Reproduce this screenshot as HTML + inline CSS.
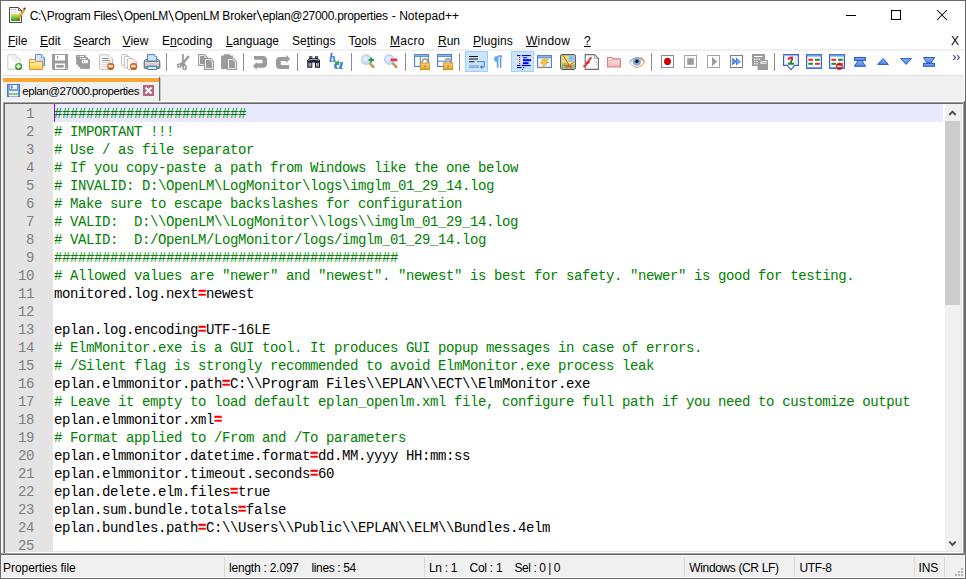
<!DOCTYPE html>
<html>
<head>
<meta charset="utf-8">
<title>Notepad++</title>
<style>
*{box-sizing:border-box;margin:0;padding:0}
html,body{width:966px;height:579px;overflow:hidden;background:#fff;font-family:"Liberation Sans",sans-serif}
#win{position:absolute;left:0;top:0;width:966px;height:579px;background:#f0f0f0;overflow:hidden}
.abs{position:absolute}
/* window frame */
#bl{left:0;top:0;width:1px;height:579px;background:#6a6a6a}
#wl{left:1px;top:1px;width:1px;height:552px;background:#fff}
#wr{left:964px;top:1px;width:1px;height:100px;background:#fff}
#bt{left:0;top:0;width:966px;height:1px;background:#6a6a6a}
#br{left:965px;top:0;width:1px;height:579px;background:#6a6a6a}
#bb{left:0;top:578px;width:966px;height:1px;background:#6a6a6a}
/* title */
#title{left:1px;top:1px;width:964px;height:30px;background:#fff}
.tt{position:absolute;top:8px;font-size:12px;line-height:16px;color:#000;white-space:pre}
/* menu */
#menu{left:1px;top:31px;width:964px;height:18px;background:#fff}
.mi{position:absolute;top:33px;font-size:12px;line-height:16px;color:#000;white-space:nowrap}
.mi u{text-decoration:underline;text-underline-offset:1px}
/* toolbar */
#tbar{left:1px;top:51px;width:964px;height:24px;background:#fff}
#tline{left:1px;top:75px;width:964px;height:1px;background:#dfdfdf}
.ic{position:absolute;top:54px;width:16px;height:16px}
.sep{position:absolute;top:53px;width:1px;height:18px;background:#8d8d8d}
.act{position:absolute;top:51px;width:23px;height:21px;background:#cce4f7;border:1px solid #99d1ff}
/* tabs */
#tabbar{left:1px;top:76px;width:963px;height:25px;background:#f0f0f0}
#tabw{left:1px;top:101px;width:964px;height:1px;background:#fff}
#tabh{left:2px;top:76px;width:157px;height:2px;background:#fbfbfb}
#tabl{left:2px;top:78px;width:1px;height:23px;background:#fbfbfb}
#tabr{left:159px;top:77px;width:1px;height:24px;background:#6b6b6b}
#tabr2{left:160px;top:78px;width:1px;height:23px;background:#c4c4c4}
#tabo{left:3px;top:78px;width:156px;height:4px;background:#faa634}
#tabt{left:22.3px;top:84px;font-size:11.5px;line-height:14px;color:#000;white-space:nowrap;letter-spacing:-0.43px}
/* editor */
#edo{left:3px;top:102px;width:960px;height:451px;background:#a0a0a0}
#edi{left:4px;top:103px;width:959px;height:450px;background:#696969}
#edw{left:5px;top:104px;width:958px;height:449px;background:#fff}
#ede{left:5px;top:104px;width:957px;height:448px;background:#e3e3e3}
#edr1{left:963px;top:102px;width:1px;height:453px;background:#a0a0a0}
#edr2{left:964px;top:101px;width:1px;height:454px;background:#696969}
#ed{left:5px;top:104px;width:956px;height:447px;background:#fff;overflow:hidden}
#gut{left:0;top:0;width:48px;height:447px;background:#e4e4e4}
#hl{left:48px;top:0;width:890px;height:18px;background:#e8e8ff}
#caret{left:49px;top:0;width:1px;height:18px;background:#8000ff}
.ln{position:absolute;left:0;width:29px;text-align:right;height:18px;line-height:18px;font-family:"Liberation Mono",monospace;font-size:14px;letter-spacing:-0.4px;color:#808080;white-space:pre;padding-top:1px}
.l{position:absolute;left:49px;height:18px;line-height:18px;font-family:"Liberation Mono",monospace;font-size:14px;letter-spacing:-0.4px;color:#000;white-space:pre;padding-top:1px}
.c{color:#008000}
.e{color:#ff0000;font-weight:bold;-webkit-text-stroke:0.35px #ff0000}
/* scrollbar */
#sb{left:940px;top:0;width:16px;height:447px;background:#f0f0f0}
#sbt{left:0px;top:17px;width:15px;height:184px;background:#cdcdcd}
/* status */
#stl1{left:1px;top:553px;width:964px;height:1px;background:#a0a0a0}
#stl2{left:1px;top:554px;width:964px;height:1px;background:#696969}
#status{left:1px;top:555px;width:964px;height:23px;background:#f0f0f0}
.st{position:absolute;top:561px;font-size:12px;line-height:14px;color:#000;white-space:nowrap}
.ss{position:absolute;top:557px;width:1px;height:20px;background:#d7d7d7}
</style>
</head>
<body>
<div id="win">
  <div id="title" class="abs"></div>
  <div class="tt" style="left:29.8px;letter-spacing:-0.45px">C:</div>
  <div class="tt" style="left:46.8px;letter-spacing:-0.345px">Program Files</div>
  <div class="tt" style="left:123.7px;letter-spacing:-0.289px">OpenLM</div>
  <div class="tt" style="left:174.4px;letter-spacing:-0.2px">OpenLM Broker</div>
  <div class="tt" style="left:262.4px;letter-spacing:-0.291px">eplan@27000.properties</div>
  <div class="tt" style="left:391.7px;letter-spacing:0.06px">- Notepad++</div>
  <svg class="abs" style="left:0;top:0" width="300" height="30"><path d="M41.3 10.4 L46 21.2" stroke="#000" stroke-width="1.05" fill="none"/></svg>
  <svg class="abs" style="left:0;top:0" width="300" height="30"><path d="M117.6 10.4 L122.5 21.2" stroke="#000" stroke-width="1.05" fill="none"/></svg>
  <svg class="abs" style="left:0;top:0" width="300" height="30"><path d="M168.8 10.4 L173.4 21.2" stroke="#000" stroke-width="1.05" fill="none"/></svg>
  <svg class="abs" style="left:0;top:0" width="300" height="30"><path d="M257.2 10.4 L261.8 21.2" stroke="#000" stroke-width="1.05" fill="none"/></svg>
  <div id="menu" class="abs"></div>
  <div id="tbar" class="abs"></div><div id="tline" class="abs"></div>
  <div id="tabbar" class="abs"></div>
  <div id="tabw" class="abs"></div><div id="tabh" class="abs"></div><div id="tabl" class="abs"></div><div id="tabr" class="abs"></div><div id="tabr2" class="abs"></div>
  <div id="tabo" class="abs"></div>
  <div id="tabt" class="abs">eplan@27000.properties</div>
  <div id="edo" class="abs"></div>
  <div id="edi" class="abs"></div><div id="edw" class="abs"></div><div id="ede" class="abs"></div><div id="edr1" class="abs"></div><div id="edr2" class="abs"></div>
  <div id="ed" class="abs">
    <div id="gut" class="abs"></div>
    <div id="hl" class="abs"></div>
    <div id="caret" class="abs"></div>
    <div class="ln" style="top:0px">1</div>
    <div class="l c" style="top:0px">########################</div>
    <div class="ln" style="top:18px">2</div>
    <div class="l c" style="top:18px"># IMPORTANT !!!</div>
    <div class="ln" style="top:36px">3</div>
    <div class="l c" style="top:36px"># Use / as file separator</div>
    <div class="ln" style="top:54px">4</div>
    <div class="l c" style="top:54px"># If you copy-paste a path from Windows like the one below</div>
    <div class="ln" style="top:72px">5</div>
    <div class="l c" style="top:72px"># INVALID: D:\OpenLM\LogMonitor\logs\imglm_01_29_14.log</div>
    <div class="ln" style="top:90px">6</div>
    <div class="l c" style="top:90px"># Make sure to escape backslashes for configuration</div>
    <div class="ln" style="top:108px">7</div>
    <div class="l c" style="top:108px"># VALID:  D:\\OpenLM\\LogMonitor\\logs\\imglm_01_29_14.log</div>
    <div class="ln" style="top:126px">8</div>
    <div class="l c" style="top:126px"># VALID:  D:/OpenLM/LogMonitor/logs/imglm_01_29_14.log</div>
    <div class="ln" style="top:144px">9</div>
    <div class="l c" style="top:144px">###########################################</div>
    <div class="ln" style="top:162px">10</div>
    <div class="l c" style="top:162px"># Allowed values are "newer" and "newest". "newest" is best for safety. "newer" is good for testing.</div>
    <div class="ln" style="top:180px">11</div>
    <div class="l" style="top:180px">monitored.log.next<span class="e">=</span>newest</div>
    <div class="ln" style="top:198px">12</div>
    <div class="ln" style="top:216px">13</div>
    <div class="l" style="top:216px">eplan.log.encoding<span class="e">=</span>UTF-16LE</div>
    <div class="ln" style="top:234px">14</div>
    <div class="l c" style="top:234px"># ElmMonitor.exe is a GUI tool. It produces GUI popup messages in case of errors.</div>
    <div class="ln" style="top:252px">15</div>
    <div class="l c" style="top:252px"># /Silent flag is strongly recommended to avoid ElmMonitor.exe process leak</div>
    <div class="ln" style="top:270px">16</div>
    <div class="l" style="top:270px">eplan.elmmonitor.path<span class="e">=</span>C:\\Program Files\\EPLAN\\ECT\\ElmMonitor.exe</div>
    <div class="ln" style="top:288px">17</div>
    <div class="l c" style="top:288px"># Leave it empty to load default eplan_openlm.xml file, configure full path if you need to customize output</div>
    <div class="ln" style="top:306px">18</div>
    <div class="l" style="top:306px">eplan.elmmonitor.xml<span class="e">=</span></div>
    <div class="ln" style="top:324px">19</div>
    <div class="l c" style="top:324px"># Format applied to /From and /To parameters</div>
    <div class="ln" style="top:342px">20</div>
    <div class="l" style="top:342px">eplan.elmmonitor.datetime.format<span class="e">=</span>dd.MM.yyyy HH:mm:ss</div>
    <div class="ln" style="top:360px">21</div>
    <div class="l" style="top:360px">eplan.elmmonitor.timeout.seconds<span class="e">=</span>60</div>
    <div class="ln" style="top:378px">22</div>
    <div class="l" style="top:378px">eplan.delete.elm.files<span class="e">=</span>true</div>
    <div class="ln" style="top:396px">23</div>
    <div class="l" style="top:396px">eplan.sum.bundle.totals<span class="e">=</span>false</div>
    <div class="ln" style="top:414px">24</div>
    <div class="l" style="top:414px">eplan.bundles.path<span class="e">=</span>C:\\Users\\Public\\EPLAN\\ELM\\Bundles.4elm</div>
    <div class="ln" style="top:432px">25</div>
    <div id="sb" class="abs"><div id="sbt" class="abs"></div></div>
  </div>
  <div id="stl1" class="abs"></div><div id="stl2" class="abs"></div><div id="status" class="abs"></div>
  <div class="mi" style="left:8px;letter-spacing:0px"><u>F</u>ile</div>
  <div class="mi" style="left:40px;letter-spacing:0px"><u>E</u>dit</div>
  <div class="mi" style="left:73.6px;letter-spacing:-0.2px"><u>S</u>earch</div>
  <div class="mi" style="left:122.6px;letter-spacing:0px"><u>V</u>iew</div>
  <div class="mi" style="left:162px;letter-spacing:0.05px">E<u>n</u>coding</div>
  <div class="mi" style="left:226px;letter-spacing:-0.05px"><u>L</u>anguage</div>
  <div class="mi" style="left:292px;letter-spacing:0px">Se<u>t</u>tings</div>
  <div class="mi" style="left:348.6px;letter-spacing:0px">T<u>o</u>ols</div>
  <div class="mi" style="left:390px;letter-spacing:0.25px"><u>M</u>acro</div>
  <div class="mi" style="left:438px;letter-spacing:0px"><u>R</u>un</div>
  <div class="mi" style="left:473px;letter-spacing:0.05px"><u>P</u>lugins</div>
  <div class="mi" style="left:526px;letter-spacing:0.25px"><u>W</u>indow</div>
  <div class="mi" style="left:584px;letter-spacing:0px"><u>?</u></div>
  <div class="mi" style="left:951px">X</div>
  <svg width="0" height="0" style="position:absolute"><defs>
<linearGradient id="gFold" x1="0" y1="0" x2="0" y2="1"><stop offset="0" stop-color="#fff3b8"/><stop offset="1" stop-color="#f6cf4a"/></linearGradient>
<linearGradient id="gDocB" x1="0" y1="0" x2="1" y2="1"><stop offset="0" stop-color="#eaf2ff"/><stop offset="1" stop-color="#a9c8f5"/></linearGradient>
<radialGradient id="gGreen" cx="0.4" cy="0.35" r="0.7"><stop offset="0" stop-color="#6cc04a"/><stop offset="1" stop-color="#1f7a1a"/></radialGradient>
<radialGradient id="gOrange" cx="0.4" cy="0.35" r="0.7"><stop offset="0" stop-color="#f58a3a"/><stop offset="1" stop-color="#c84a08"/></radialGradient>
<linearGradient id="gLock" x1="0" y1="0" x2="0" y2="1"><stop offset="0" stop-color="#fbe08a"/><stop offset="1" stop-color="#d99a1c"/></linearGradient>
<linearGradient id="gBlue" x1="0" y1="0" x2="0" y2="1"><stop offset="0" stop-color="#6ea6f0"/><stop offset="1" stop-color="#2a68d0"/></linearGradient>
<linearGradient id="gPink" x1="0" y1="0" x2="0" y2="1"><stop offset="0" stop-color="#fdf0f0"/><stop offset="1" stop-color="#f0b4b4"/></linearGradient>
<radialGradient id="gLens" cx="0.4" cy="0.4" r="0.7"><stop offset="0" stop-color="#eaf3ff"/><stop offset="1" stop-color="#b5d0f2"/></radialGradient>
<linearGradient id="gPrn" x1="0" y1="0" x2="0" y2="1"><stop offset="0" stop-color="#efefef"/><stop offset="1" stop-color="#9a9a9a"/></linearGradient>
<linearGradient id="gNav" x1="0" y1="0" x2="0" y2="1"><stop offset="0" stop-color="#8ab6f4"/><stop offset="1" stop-color="#4a86e2"/></linearGradient>
</defs></svg>
  <div class="act" style="left:465px"></div>
  <div class="act" style="left:511px"></div>
  <div class="sep" style="left:166px"></div>
  <div class="sep" style="left:243px"></div>
  <div class="sep" style="left:297px"></div>
  <div class="sep" style="left:351px"></div>
  <div class="sep" style="left:405px"></div>
  <div class="sep" style="left:459px"></div>
  <div class="sep" style="left:651px"></div>
  <div class="sep" style="left:774px"></div>
  <svg class="abs" style="left:7px;top:54px;overflow:visible" width="16" height="16" viewBox="0 0 16 16"><path d="M0.8 0.8 H9 L13.2 5 V15.2 H0.8 Z" fill="#fdfdfd" stroke="#c9c9c9" stroke-width="1"/>
<path d="M9 0.8 V5 H13.2" fill="#f1f1f1" stroke="#d5d5d5" stroke-width="0.8"/>
<path d="M3.5 3 H7.5 M5 5 H9 M7.5 7 H11" stroke="#ececec" stroke-width="1.4"/>
<circle cx="11.6" cy="12.4" r="3.5" fill="url(#gGreen)"/>
<path d="M11.6 10.2 V14.6 M9.4 12.4 H13.8" stroke="#fff" stroke-width="1.5"/></svg>
  <svg class="abs" style="left:29px;top:54px;overflow:visible" width="16" height="16" viewBox="0 0 16 16"><path d="M6.5 0.5 H12.5 L15.4 3.4 V11.8 H6.5 Z" fill="url(#gDocB)" stroke="#4f86d8" stroke-width="1"/>
<path d="M12.5 0.5 V3.3 H15.3" fill="#fff" stroke="#4f86d8" stroke-width="0.7"/>
<path d="M0.5 5.5 H6 L7 7.5 H13.5 V15.5 H0.5 Z" fill="url(#gFold)" stroke="#e48f24" stroke-width="1"/>
<path d="M1.5 8.6 L5 8.6 L6.5 7.6" stroke="#eea23a" stroke-width="1" fill="none"/>
<path d="M1.2 10 H13" stroke="#fff8d8" stroke-width="0.8" opacity="0.7"/></svg>
  <svg class="abs" style="left:52px;top:54px;overflow:visible" width="16" height="16" viewBox="0 0 16 16"><path d="M0 0 H16 V16 H1 L0 15 Z" fill="#9b9b9b"/>
<rect x="3" y="1" width="10" height="5.5" fill="#fff"/>
<rect x="5.2" y="2" width="1" height="3" fill="#9b9b9b"/>
<rect x="3" y="9.5" width="10" height="5.5" fill="#fff"/>
<rect x="4.3" y="11" width="7.4" height="2.6" fill="#9b9b9b"/>
<rect x="14" y="14" width="1" height="1" fill="#fff"/></svg>
  <svg class="abs" style="left:76px;top:54px;overflow:visible" width="16" height="16" viewBox="0 0 16 16"><g fill="#9b9b9b"><rect x="0.1" y="1" width="9.7" height="9.7"/><rect x="2" y="3.1" width="9.9" height="9.7"/><rect x="4.1" y="5" width="9.8" height="9.9"/></g>
<rect x="4.1" y="1.9" width="3.9" height="1.1" fill="#fff"/><rect x="1.8" y="1.9" width="1" height="1" fill="#fff"/>
<rect x="5.9" y="4" width="3.9" height="1.1" fill="#fff"/><rect x="3.9" y="4" width="1" height="1" fill="#fff"/>
<rect x="5.9" y="6.1" width="6" height="3.1" fill="#fff"/>
<rect x="7" y="6.8" width="0.9" height="1.7" fill="#9b9b9b"/></svg>
  <svg class="abs" style="left:99px;top:54px;overflow:visible" width="16" height="16" viewBox="0 0 16 16"><path d="M1.6 0.8 H9.4 L13.6 5 V14.4 Q13.6 15.3 12.7 15.3 H1.6 Q0.7 15.3 0.7 14.4 V1.7 Q0.7 0.8 1.6 0.8 Z" fill="#fdfdfd" stroke="#bcbcbc" stroke-width="1"/>
<path d="M9.4 0.8 V5 H13.6" fill="#f6f6f6" stroke="#d0d0d0" stroke-width="0.8"/>
<path d="M2.9 4.5 H9 M2.9 6.6 H11" stroke="#7e7e7e" stroke-width="0.9"/>
<path d="M2.9 8.7 H11 M2.9 10.6 H8.5 M2.9 12.6 H8" stroke="#c4c4c4" stroke-width="0.8"/>
<circle cx="11.7" cy="12.3" r="3.6" fill="url(#gOrange)"/>
<rect x="9.5" y="11.5" width="4.4" height="1.7" fill="#fff"/></svg>
  <svg class="abs" style="left:121px;top:54px;overflow:visible" width="16" height="16" viewBox="0 0 16 16"><path d="M1.6 0.6 H5.4 L7.6 2.8 V10.6 Q7.6 11.4 6.8 11.4 H1.4 Q0.5 11.4 0.5 10.6 V1.6 Q0.5 0.6 1.6 0.6 Z" fill="#fefefe" stroke="#b6b6b6" stroke-width="0.9"/>
<path d="M4.4 2.4 H8.6 L11.2 5 V12.8 Q11.2 13.6 10.4 13.6 H4.2 Q3.3 13.6 3.3 12.8 V3.4 Q3.3 2.4 4.4 2.4 Z" fill="#fefefe" stroke="#b6b6b6" stroke-width="0.9"/>
<path d="M7.4 4.6 H12.2 L15.6 8 V14.6 Q15.6 15.4 14.8 15.4 H7.2 Q6.3 15.4 6.3 14.6 V5.6 Q6.3 4.6 7.4 4.6 Z" fill="#fefefe" stroke="#b6b6b6" stroke-width="0.9"/>
<path d="M12.2 4.6 V8 H15.6" fill="none" stroke="#cfcfcf" stroke-width="0.7"/>
<path d="M8.4 7.4 H11" stroke="#e2e2e2" stroke-width="1"/>
<circle cx="12.5" cy="12.3" r="3.6" fill="url(#gOrange)"/>
<rect x="10.3" y="11.5" width="4.4" height="1.7" fill="#fff"/></svg>
  <svg class="abs" style="left:144px;top:54px;overflow:visible" width="16" height="16" viewBox="0 0 16 16"><path d="M3 5.2 H13 Q15.8 5.6 15.8 8.2 V13.4 Q15.8 14.4 14.8 14.4 H1.2 Q0.2 14.4 0.2 13.4 V8.2 Q0.2 5.6 3 5.2 Z" fill="url(#gPrn)" stroke="#4e4e4e" stroke-width="0.9"/>
<path d="M3.5 7 V0.6 H10.6 L12.6 2.6 V7 Z" fill="#cfe3fb" stroke="#3f82de" stroke-width="1"/>
<path d="M10.6 0.6 V2.6 H12.6" fill="#eef5ff" stroke="#3f82de" stroke-width="0.6"/>
<path d="M1.6 7.5 H14.4" stroke="#767676" stroke-width="0.9"/>
<rect x="1.4" y="8.2" width="13.2" height="3.6" fill="#dedede"/>
<path d="M2 9.4 H14 M2 10.6 H14" stroke="#c6c6c6" stroke-width="0.6"/>
<rect x="2.6" y="11.6" width="10.8" height="1.2" fill="#7c7c7c"/>
<path d="M3.6 12.6 H12.6 V15.5 H3.6 Z" fill="#f6faff" stroke="#3f82de" stroke-width="1"/></svg>
  <svg class="abs" style="left:175px;top:54px;overflow:visible" width="16" height="16" viewBox="0 0 16 16"><rect x="7" y="0.1" width="1.8" height="9.5" fill="#9b9b9b"/>
<path d="M13.9 2 L8 9.2" stroke="#9b9b9b" stroke-width="2.4" fill="none"/>
<path d="M3.6 10 L7.6 7.4 L10.6 10.2 L10 12.5 L6 12.2 Z" fill="#9b9b9b"/>
<rect x="2.1" y="9.7" width="4.2" height="4.1" rx="0.9" fill="#9b9b9b"/>
<ellipse cx="9.6" cy="13.4" rx="2.4" ry="2.6" fill="#9b9b9b"/>
<circle cx="4.3" cy="11.8" r="0.75" fill="#fff"/>
<ellipse cx="9.6" cy="13.5" rx="0.7" ry="1.15" fill="#fff"/></svg>
  <svg class="abs" style="left:198px;top:54px;overflow:visible" width="16" height="16" viewBox="0 0 16 16"><path d="M0.6 0.6 H6.5 L9.4 3.5 V11.4 H0.6 Z" fill="#fff" stroke="#9b9b9b" stroke-width="1.1"/>
<path d="M2 2 H6 L8 4 V10 H2 Z" fill="#9b9b9b"/>
<path d="M6.6 4.6 H12.5 L15.4 7.5 V15.4 H6.6 Z" fill="#fff" stroke="#9b9b9b" stroke-width="1.1"/>
<path d="M8 6 H12 L14 8 V14 H8 Z" fill="#9b9b9b"/></svg>
  <svg class="abs" style="left:221px;top:54px;overflow:visible" width="16" height="16" viewBox="0 0 16 16"><path d="M0 1.5 H3 V0.2 H9 V1.5 H12 V15 H0 Z" fill="#9b9b9b"/>
<path d="M6.6 4.6 H12.5 L15.4 7.5 V15.4 H6.6 Z" fill="#fff" stroke="#9b9b9b" stroke-width="1.1"/>
<path d="M8 6 H12 L14 8 V14 H8 Z" fill="#9b9b9b"/></svg>
  <svg class="abs" style="left:252px;top:54px;overflow:visible" width="16" height="16" viewBox="0 0 16 16"><path d="M2 1.9 H11 Q15 1.9 15 6 V9.8 Q15 13.8 11 13.8 H4.6 V15.9 L1 12 L4.6 8.1 V9.2 H9.5 Q10.6 9.2 10.6 8 V7 Q10.6 5.8 9.5 5.8 H2 Z" fill="#9b9b9b"/></svg>
  <svg class="abs" style="left:275px;top:54px;overflow:visible" width="16" height="16" viewBox="0 0 16 16"><path d="M11.4 0.9 L15 4.8 L11.4 8.9 V7.1 H6.8 Q5.7 7.1 5.7 8.2 V9.9 Q5.7 11 6.8 11 H14 V14.9 H5 Q1 14.9 1 11 V7 Q1 3 5 3 H11.4 Z" fill="#9b9b9b"/></svg>
  <svg class="abs" style="left:307px;top:54px;overflow:visible" width="14" height="16" viewBox="0 0 14 16"><path d="M2.2 2.6 H5.3 V4.2 H7.9 V2.6 H11 V4.2 L13 6.2 V13.8 H7.9 V8.4 H5.3 V13.8 H0.2 V6.2 L2.2 4.2 Z" fill="#16181c"/>
<rect x="2.4" y="2" width="2.7" height="2.2" fill="#566274"/><rect x="8.1" y="2" width="2.7" height="2.2" fill="#566274"/>
<path d="M1.2 5.6 Q6.6 3.8 12 5.6 V6.8 Q6.6 5.2 1.2 6.8 Z" fill="#8ea4c4"/>
<rect x="1.4" y="9" width="3" height="3.6" fill="#b4bcc8"/><rect x="9" y="9" width="3" height="3.6" fill="#b4bcc8"/>
<path d="M2.9 9 V12.6 M10.5 9 V12.6" stroke="#5a6270" stroke-width="0.7"/>
<path d="M0.8 8.2 H5 M8.4 8.2 H12.6" stroke="#3a4250" stroke-width="0.8"/></svg>
  <svg class="abs" style="left:329px;top:54px;overflow:visible" width="16" height="16" viewBox="0 0 16 16"><text x="0.2" y="7.6" font-family="Liberation Serif" font-style="italic" font-weight="bold" font-size="12" fill="#2f76e2">b</text>
<text transform="translate(4.8 15.4) scale(1.3 1)" font-family="Liberation Serif" font-style="italic" font-weight="bold" font-size="15" fill="#3b82ea">a</text>
<path d="M5 6.2 L8.6 9.6 M9.2 6.6 L9.2 10.2 L5.6 10.2" stroke="#35a04e" stroke-width="1.5" fill="none"/></svg>
  <svg class="abs" style="left:361px;top:54px;overflow:visible" width="16" height="16" viewBox="0 0 16 16"><path d="M8.5 9 L12.3 12.8" stroke="#b87a3a" stroke-width="2.4" stroke-linecap="round"/>
<path d="M9 9.5 L12 12.5" stroke="#e8c48a" stroke-width="0.9" stroke-linecap="round"/>
<circle cx="5.2" cy="5.6" r="4.8" fill="url(#gLens)" stroke="#a9c4ea" stroke-width="0.9"/>
<path d="M10.3 3.4 V8.6 M7.7 6 H12.9" stroke="#2f9a3a" stroke-width="2.1"/></svg>
  <svg class="abs" style="left:384px;top:54px;overflow:visible" width="16" height="16" viewBox="0 0 16 16"><path d="M8.5 9 L12.3 12.8" stroke="#b87a3a" stroke-width="2.4" stroke-linecap="round"/>
<path d="M9 9.5 L12 12.5" stroke="#e8c48a" stroke-width="0.9" stroke-linecap="round"/>
<circle cx="5.2" cy="5.6" r="4.8" fill="url(#gLens)" stroke="#a9c4ea" stroke-width="0.9"/>
<rect x="6.6" y="4.6" width="6.6" height="2.6" fill="#e8323c" stroke="#f59aa0" stroke-width="0.5"/></svg>
  <svg class="abs" style="left:414px;top:54px;overflow:visible" width="16" height="16" viewBox="0 0 16 16"><rect x="0.6" y="0.6" width="13.8" height="11.8" fill="#fff" stroke="#4a7fd0" stroke-width="1.1"/>
<rect x="0.6" y="0.6" width="13.8" height="2" fill="#8fb4ea" stroke="#4a7fd0" stroke-width="0.8"/>
<path d="M6.3 2.6 V12.4" stroke="#4a7fd0" stroke-width="1"/><path d="M8.3 9.5 V7.6 Q8.3 4.8 11 4.8 Q13.7 4.8 13.7 7.6 V9.5" fill="none" stroke="#a2a2a2" stroke-width="1.7"/>
<rect x="6.3" y="9" width="9.4" height="6.7" fill="url(#gLock)" stroke="#c98a14" stroke-width="0.8"/>
<path d="M7 11.2 H15 M7 13.4 H15" stroke="#e8b84a" stroke-width="0.6"/>
<rect x="10.6" y="11.4" width="0.9" height="1.8" fill="#8a5a0a"/></svg>
  <svg class="abs" style="left:437px;top:54px;overflow:visible" width="16" height="16" viewBox="0 0 16 16"><rect x="0.6" y="0.6" width="13.8" height="11.8" fill="#fff" stroke="#4a7fd0" stroke-width="1.1"/>
<rect x="0.6" y="0.6" width="13.8" height="2" fill="#8fb4ea" stroke="#4a7fd0" stroke-width="0.8"/>
<path d="M0.6 7.2 H14.4" stroke="#4a7fd0" stroke-width="1"/><path d="M8.3 9.5 V7.6 Q8.3 4.8 11 4.8 Q13.7 4.8 13.7 7.6 V9.5" fill="none" stroke="#a2a2a2" stroke-width="1.7"/>
<rect x="6.3" y="9" width="9.4" height="6.7" fill="url(#gLock)" stroke="#c98a14" stroke-width="0.8"/>
<path d="M7 11.2 H15 M7 13.4 H15" stroke="#e8b84a" stroke-width="0.6"/>
<rect x="10.6" y="11.4" width="0.9" height="1.8" fill="#8a5a0a"/></svg>
  <svg class="abs" style="left:469px;top:54px;overflow:visible" width="16" height="16" viewBox="0 0 16 16"><path d="M0 2.5 H9 M0 5 H9 M0 7.7 H5.5" stroke="#111" stroke-width="1.1"/>
<path d="M8 7.7 H15.3 V13 H12.5" stroke="#3f7ad8" stroke-width="1" fill="none"/>
<path d="M10.8 13 L13.2 10.8 V15.2 Z" fill="#3f7ad8"/>
<rect x="0" y="11.2" width="10" height="2.8" fill="#7fa8e6"/><rect x="0" y="12.3" width="10" height="0.8" fill="#a9c4ee"/></svg>
  <svg class="abs" style="left:492px;top:54px;overflow:visible" width="16" height="16" viewBox="0 0 16 16"><path d="M6 2 H10.2 M5.6 2.2 V13.8 M8.6 2.2 V13.8" stroke="#6aa3ea" stroke-width="1.7" fill="none"/>
<path d="M5.6 2 Q2 2 2 5 Q2 8 5.6 8 Z" fill="#6aa3ea"/></svg>
  <svg class="abs" style="left:515px;top:54px;overflow:visible" width="16" height="16" viewBox="0 0 16 16"><g fill="#0000f0"><rect x="2" y="1" width="3.4" height="1.1"/><rect x="6.8" y="1" width="9" height="1.1"/>
<rect x="8" y="3.3" width="4.2" height="1"/>
<rect x="8" y="5.2" width="8" height="2"/>
<rect x="8" y="8.2" width="5.6" height="2"/>
<rect x="2" y="11" width="3.4" height="1.1"/><rect x="6.8" y="11" width="9" height="1.1"/>
<rect x="2" y="13" width="4.6" height="1.1"/><rect x="8" y="13" width="1.4" height="1.1"/>
<rect x="7" y="15" width="1.1" height="1"/></g>
<path d="M4.6 3 V10.5" stroke="#f00000" stroke-width="1" stroke-dasharray="1 1"/></svg>
  <svg class="abs" style="left:537px;top:54px;overflow:visible" width="16" height="16" viewBox="0 0 16 16"><rect x="0.6" y="1.6" width="13.8" height="11.8" fill="#f4f8ff" stroke="#4a7fd0" stroke-width="1.1"/>
<rect x="0.6" y="1.6" width="13.8" height="2.2" fill="#8fb4ea" stroke="#4a7fd0" stroke-width="0.8"/>
<path d="M5.5 5 H11.5 L9 8 H12 L4.5 14.5 L6.8 9.8 H3.5 Z" fill="#f1c548" stroke="#d9a520" stroke-width="0.6"/></svg>
  <svg class="abs" style="left:560px;top:54px;overflow:visible" width="16" height="16" viewBox="0 0 16 16"><rect x="0.6" y="0.6" width="14.8" height="14.8" rx="1.8" fill="#e8e070" stroke="#54546e" stroke-width="1.1"/>
<rect x="8.5" y="1.5" width="6" height="6.5" fill="#9cc4f0"/>
<path d="M1.5 10 Q5 8 8 10.5 T14.5 9.5 V14.5 H1.5 Z" fill="#8ac468"/>
<rect x="10" y="3" width="2" height="2" fill="#7ab8a0"/>
<path d="M3.2 1.5 L11 14.5 M13.5 8.5 L6 14 M4 11.5 L12 12.5" stroke="#e8402a" stroke-width="1" fill="none"/></svg>
  <svg class="abs" style="left:583px;top:54px;overflow:visible" width="16" height="16" viewBox="0 0 16 16"><path d="M2.2 0.6 H11.6 L15.4 4.4 V15.4 H2.2 Z" fill="#fdfdfd" stroke="#6e6e6e" stroke-width="1.1"/>
<path d="M11.6 0.6 V4.4 H15.4" fill="none" stroke="#8a8a8a" stroke-width="0.7"/>
<path d="M13.2 7.5 V13" stroke="#8a9a8a" stroke-width="0.9" stroke-dasharray="1.2 1.6"/>
<path d="M0.4 12.8 L2.6 11.4 L4.2 8.6 L6 6.8 L7 4.6 L8.6 3.6" stroke="#e5343e" stroke-width="2.1" fill="none" stroke-linejoin="round"/>
<path d="M3 9.6 L6.4 8.4" stroke="#e2242e" stroke-width="1.6"/>
<path d="M7.2 4.2 L8.4 3.4" stroke="#f08aa0" stroke-width="1"/></svg>
  <svg class="abs" style="left:606px;top:54px;overflow:visible" width="16" height="16" viewBox="0 0 16 16"><path d="M1.6 3.5 H6 L7 4.9 H14.4 V13 H1.6 Z" fill="url(#gPink)" stroke="#d9787c" stroke-width="1.1"/>
<path d="M2.6 6.6 H6 L7.2 5.9 H13.4" stroke="#e6a0a4" stroke-width="0.9" fill="none"/></svg>
  <svg class="abs" style="left:629px;top:54px;overflow:visible" width="16" height="16" viewBox="0 0 16 16"><path d="M0.4 8 Q8 -0.2 15.6 8 Q8 15.8 0.4 8 Z" fill="#fff"/>
<path d="M0.6 7.8 Q8 -0.4 15.4 7.4" stroke="#a4a4a4" stroke-width="1.3" fill="none"/>
<path d="M0.6 8.2 Q3 12 6 13" stroke="#bcc4b0" stroke-width="1" fill="none"/>
<path d="M6 13.2 Q11 14.6 15.4 8 Q14 4.6 11.6 3.4" stroke="#e2a25e" stroke-width="1.2" fill="none"/>
<circle cx="7.8" cy="7.6" r="3.9" fill="#7ea6dc"/><circle cx="7.8" cy="7.6" r="3.9" fill="none" stroke="#9cbce8" stroke-width="0.8"/>
<circle cx="7.9" cy="7.2" r="1.7" fill="#10141c"/></svg>
  <svg class="abs" style="left:661px;top:55px;overflow:visible" width="13" height="13" viewBox="0 0 13 13"><rect x="0.5" y="0.5" width="12" height="12" fill="#fff" stroke="#8a8a8a" stroke-width="1"/>
<path d="M4.9 3.1 H8.1 L9.9 4.9 V8.1 L8.1 9.9 H4.9 L3.1 8.1 V4.9 Z" fill="#cc0000"/></svg>
  <svg class="abs" style="left:684px;top:55px;overflow:visible" width="13" height="13" viewBox="0 0 13 13"><rect x="0.5" y="0.5" width="12" height="12" fill="#fff" stroke="#a6a6a6" stroke-width="1"/>
<rect x="3.2" y="3.2" width="6.6" height="6.6" fill="#9b9b9b"/></svg>
  <svg class="abs" style="left:707px;top:55px;overflow:visible" width="13" height="13" viewBox="0 0 13 13"><rect x="0.5" y="0.5" width="12" height="12" fill="#fff" stroke="#a6a6a6" stroke-width="1"/>
<path d="M5 1.8 L10.2 6.5 L5 11.2 Z" fill="#9b9b9b"/></svg>
  <svg class="abs" style="left:730px;top:55px;overflow:visible" width="13" height="13" viewBox="0 0 13 13"><rect x="0.5" y="0.5" width="12" height="12" fill="#fff" stroke="#7e7e7e" stroke-width="1"/>
<path d="M2.2 2.4 L6.8 6.5 L2.2 10.6 Z" fill="#2f6fd8"/><path d="M6 2.4 L10.8 6.5 L6 10.6 Z" fill="#3f80ea"/>
<path d="M3.2 4.8 L5.2 6.5 L3.2 8.2 Z" fill="#7fb0f5"/><path d="M7 4.8 L9 6.5 L7 8.2 Z" fill="#9cc4f8"/></svg>
  <svg class="abs" style="left:752px;top:54px;overflow:visible" width="16" height="16" viewBox="0 0 16 16"><rect x="0" y="0" width="13" height="12" fill="#9b9b9b"/>
<rect x="5.5" y="6" width="10.5" height="10" fill="#9b9b9b"/>
<path d="M2 2.5 H10.5" stroke="#fff" stroke-width="1.1"/>
<g fill="#fff"><rect x="2" y="4.6" width="1.4" height="1.3"/><rect x="4.4" y="4.6" width="1.4" height="1.3"/><rect x="6.8" y="4.6" width="1.4" height="1.3"/>
<rect x="2" y="6.9" width="1.4" height="1.3"/><rect x="4.4" y="6.9" width="1.4" height="1.3"/>
<rect x="2" y="9.2" width="1.4" height="1.3"/><rect x="4.4" y="9.2" width="1.4" height="1.3"/>
<rect x="8.5" y="7" width="6" height="2.8"/></g>
<rect x="9.6" y="7.4" width="1" height="1.8" fill="#9b9b9b"/><rect x="11.5" y="8.2" width="2.5" height="1" fill="#9b9b9b"/></svg>
  <svg class="abs" style="left:783px;top:54px;overflow:visible" width="16" height="16" viewBox="0 0 16 16"><path d="M0.6 0.6 H15.4 V11.4 H11.8 L8 15.6 L4.2 11.4 H0.6 Z" fill="#fff" stroke="#2f62c8" stroke-width="1.2"/>
<path d="M0.4 1.4 H14.6" stroke="#8fb4ea" stroke-width="1"/>
<path d="M12.6 2 V10.6" stroke="#d8e4f6" stroke-width="2"/>
<path d="M5 5.4 L7.6 3.4 H9 V6.8" fill="none" stroke="#e8202a" stroke-width="2"/>
<path d="M8 6.4 V9.6 M4.8 9.8 H11.2" stroke="#1f8a2a" stroke-width="2.1" fill="none"/></svg>
  <svg class="abs" style="left:806px;top:54px;overflow:visible" width="16" height="16" viewBox="0 0 16 16"><rect x="0.6" y="0.6" width="14.8" height="13.8" fill="#fff" stroke="#2f62c8" stroke-width="1.2"/>
<rect x="0.6" y="0.6" width="14.8" height="2" fill="#6f9ee8"/>
<path d="M0.6 13.6 H15.4" stroke="#6f9ee8" stroke-width="1.4"/>
<rect x="2.4" y="4.8" width="4.6" height="2" fill="#f0202a"/><rect x="9" y="4.8" width="4.8" height="2" fill="#1f8a2a"/>
<rect x="2.4" y="8.8" width="4.6" height="2" fill="#1f8a2a"/><rect x="9" y="8.8" width="4.8" height="2" fill="#f0202a"/></svg>
  <svg class="abs" style="left:829px;top:54px;overflow:visible" width="16" height="16" viewBox="0 0 16 16"><rect x="0.6" y="0.6" width="14.8" height="13.8" fill="#fff" stroke="#2f62c8" stroke-width="1.2"/>
<rect x="0.6" y="0.6" width="14.8" height="2" fill="#6f9ee8"/>
<path d="M0.6 13.6 H15.4" stroke="#6f9ee8" stroke-width="1.4"/>
<rect x="2.4" y="4.8" width="4.6" height="2" fill="#f0202a"/><rect x="9" y="4.8" width="4.8" height="2" fill="#1f8a2a"/>
<rect x="2.4" y="8.8" width="4.6" height="2" fill="#1f8a2a"/><rect x="9" y="8.8" width="4.8" height="2" fill="#f0202a"/><circle cx="10.4" cy="12.4" r="3.4" fill="#b8141c"/><circle cx="10.4" cy="12.4" r="3.4" fill="none" stroke="#d85a60" stroke-width="0.6"/>
<rect x="8.2" y="11.6" width="4.4" height="1.6" fill="#fff"/></svg>
  <svg class="abs" style="left:853px;top:54px;overflow:visible" width="16" height="16" viewBox="0 0 16 16"><rect x="1.5" y="3.5" width="11" height="2.9" fill="url(#gNav)" stroke="#2458cc" stroke-width="1" stroke-linejoin="miter"/><path d="M5.2 6.6 H8.8 L12.6 12.3 H1.4 Z" fill="url(#gNav)" stroke="#2458cc" stroke-width="1" stroke-linejoin="miter"/></svg>
  <svg class="abs" style="left:876px;top:54px;overflow:visible" width="16" height="16" viewBox="0 0 16 16"><path d="M7.1 4.6 L12.4 10.4 H1.7 Z" fill="url(#gNav)" stroke="#2458cc" stroke-width="1" stroke-linejoin="miter"/></svg>
  <svg class="abs" style="left:899px;top:54px;overflow:visible" width="16" height="16" viewBox="0 0 16 16"><path d="M1.7 4.6 H12.4 L7.1 10.4 Z" fill="url(#gNav)" stroke="#2458cc" stroke-width="1" stroke-linejoin="miter"/></svg>
  <svg class="abs" style="left:922px;top:54px;overflow:visible" width="16" height="16" viewBox="0 0 16 16"><path d="M1.4 3.5 H12.6 L8.8 9.2 H5.2 Z" fill="url(#gNav)" stroke="#2458cc" stroke-width="1" stroke-linejoin="miter"/><rect x="1.5" y="9.4" width="11" height="2.9" fill="url(#gNav)" stroke="#2458cc" stroke-width="1" stroke-linejoin="miter"/></svg>
  <div class="st" style="left:3px;white-space:pre;letter-spacing:-0.05px">Properties file</div>
  <div class="st" style="left:229px;white-space:pre;letter-spacing:-0.21px">length : 2.097</div>
  <div class="st" style="left:311.5px;white-space:pre;letter-spacing:-0.37px">lines : 54</div>
  <div class="st" style="left:429px;white-space:pre;letter-spacing:-0.33px">Ln : 1</div>
  <div class="st" style="left:469.5px;white-space:pre;letter-spacing:-0.27px">Col : 1</div>
  <div class="st" style="left:514.5px;white-space:pre;letter-spacing:-0.45px">Sel : 0 | 0</div>
  <div class="st" style="left:689.3px;white-space:pre;letter-spacing:-0.36px">Windows (CR LF)</div>
  <div class="st" style="left:799.5px;white-space:pre;letter-spacing:-0.4px">UTF-8</div>
  <div class="st" style="left:918.6px;white-space:pre;letter-spacing:-0.23px">INS</div>
  <div class="ss" style="left:224px"></div>
  <div class="ss" style="left:424px"></div>
  <div class="ss" style="left:684px"></div>
  <div class="ss" style="left:794px"></div>
  <div class="ss" style="left:914px"></div>
  <div class="ss" style="left:944px"></div>
  <div class="abs" style="left:964px;top:555px;width:1px;height:23px;background:#fff"></div>
  <div class="abs" style="left:1px;top:577px;width:964px;height:1px;background:#fff"></div>
  <div class="abs" style="left:846px;top:15px;width:10px;height:1px;background:#000"></div>
  <div class="abs" style="left:891px;top:10px;width:10px;height:10px;border:1px solid #000"></div>
  <svg class="abs" style="left:936px;top:9px" width="12" height="12" viewBox="0 0 12 12"><path d="M1 1 L11 11 M11 1 L1 11" stroke="#000" stroke-width="1.05" fill="none"/></svg>
  <svg class="abs" style="left:9px;top:7px" width="17" height="17" viewBox="0 0 17 17">
<defs><linearGradient id="tg" x1="0" y1="0" x2="0" y2="1"><stop offset="0" stop-color="#d8e860"/><stop offset="1" stop-color="#1f9a1f"/></linearGradient></defs>
<path d="M0.5 0.5 H9.5 L12.5 3.5 V15.5 H0.5 Z" fill="#fff" stroke="#4a4a4a" stroke-width="1"/>
<path d="M9.5 0.5 V3.5 H12.5" fill="none" stroke="#4a4a4a" stroke-width="0.8"/>
<path d="M2 2.5 H8" stroke="#9a9a9a" stroke-width="1" stroke-dasharray="1 1"/>
<path d="M2 5 H8" stroke="#b8d0e8" stroke-width="0.8"/>
<rect x="2" y="7" width="9" height="7" fill="url(#tg)"/>
<path d="M8 13.5 L9 11 L14.2 2.5 L15.8 3.5 L10.5 12 Z" fill="#f5a623" stroke="#c87a10" stroke-width="0.4"/>
<path d="M8 13.5 L9 11 L10.5 12 Z" fill="#5a3a1a"/>
<path d="M14.2 2.5 L15.8 3.5 L16.3 2.6 L14.8 1.6 Z" fill="#7a90c0"/>
<circle cx="15.6" cy="1.5" r="1.1" fill="#a01020"/>
</svg>
  <svg class="abs" style="left:7px;top:84px" width="14" height="14" viewBox="0 0 14 14">
<rect x="0.5" y="0.5" width="12" height="12" fill="#7ba0d8" stroke="#4a78c0" stroke-width="1"/>
<rect x="3" y="1" width="7" height="4" fill="#f4f6fb"/>
<rect x="4" y="1.5" width="1.5" height="3" fill="#4a78c0"/>
<rect x="2" y="7" width="9" height="5.5" fill="#e8eef8"/>
<rect x="2" y="9" width="9" height="2" fill="#8fc878"/>
</svg>
  <svg class="abs" style="left:143px;top:85px" width="11" height="11" viewBox="0 0 11 11">
<rect x="0" y="0" width="11" height="11" fill="#b4677f"/>
<path d="M2.5 2.5 L8.5 8.5 M8.5 2.5 L2.5 8.5" stroke="#fff" stroke-width="2" fill="none"/>
</svg>
  <svg class="abs" style="left:948px;top:108px" width="10" height="10" viewBox="0 0 10 10"><path d="M1.3 7 L4.5 3.6 L7.7 7" stroke="#505050" stroke-width="1.9" fill="none"/></svg>
  <svg class="abs" style="left:948px;top:538px" width="10" height="10" viewBox="0 0 10 10"><path d="M1.3 3.6 L4.5 7 L7.7 3.6" stroke="#505050" stroke-width="1.9" fill="none"/></svg>
  <svg class="abs" style="left:952px;top:54px" width="10" height="8" viewBox="0 0 10 8"><path d="M1.2 1.2 L3.6 3.6 L1.2 6 M5 1.2 L7.4 3.6 L5 6" stroke="#4a4a8a" stroke-width="1.1" fill="none"/></svg>
  <svg class="abs" style="left:955px;top:568px" width="8" height="8" viewBox="0 0 8 8"><rect x="6" y="0" width="2" height="2" fill="#b4b4b4"/><rect x="3" y="3" width="2" height="2" fill="#b4b4b4"/><rect x="6" y="3" width="2" height="2" fill="#b4b4b4"/><rect x="0" y="6" width="2" height="2" fill="#b4b4b4"/><rect x="3" y="6" width="2" height="2" fill="#b4b4b4"/><rect x="6" y="6" width="2" height="2" fill="#b4b4b4"/></svg>
  <div id="wl" class="abs"></div><div id="wr" class="abs"></div><div id="bl" class="abs"></div><div id="bt" class="abs"></div><div id="br" class="abs"></div><div id="bb" class="abs"></div>
</div>
</body>
</html>
